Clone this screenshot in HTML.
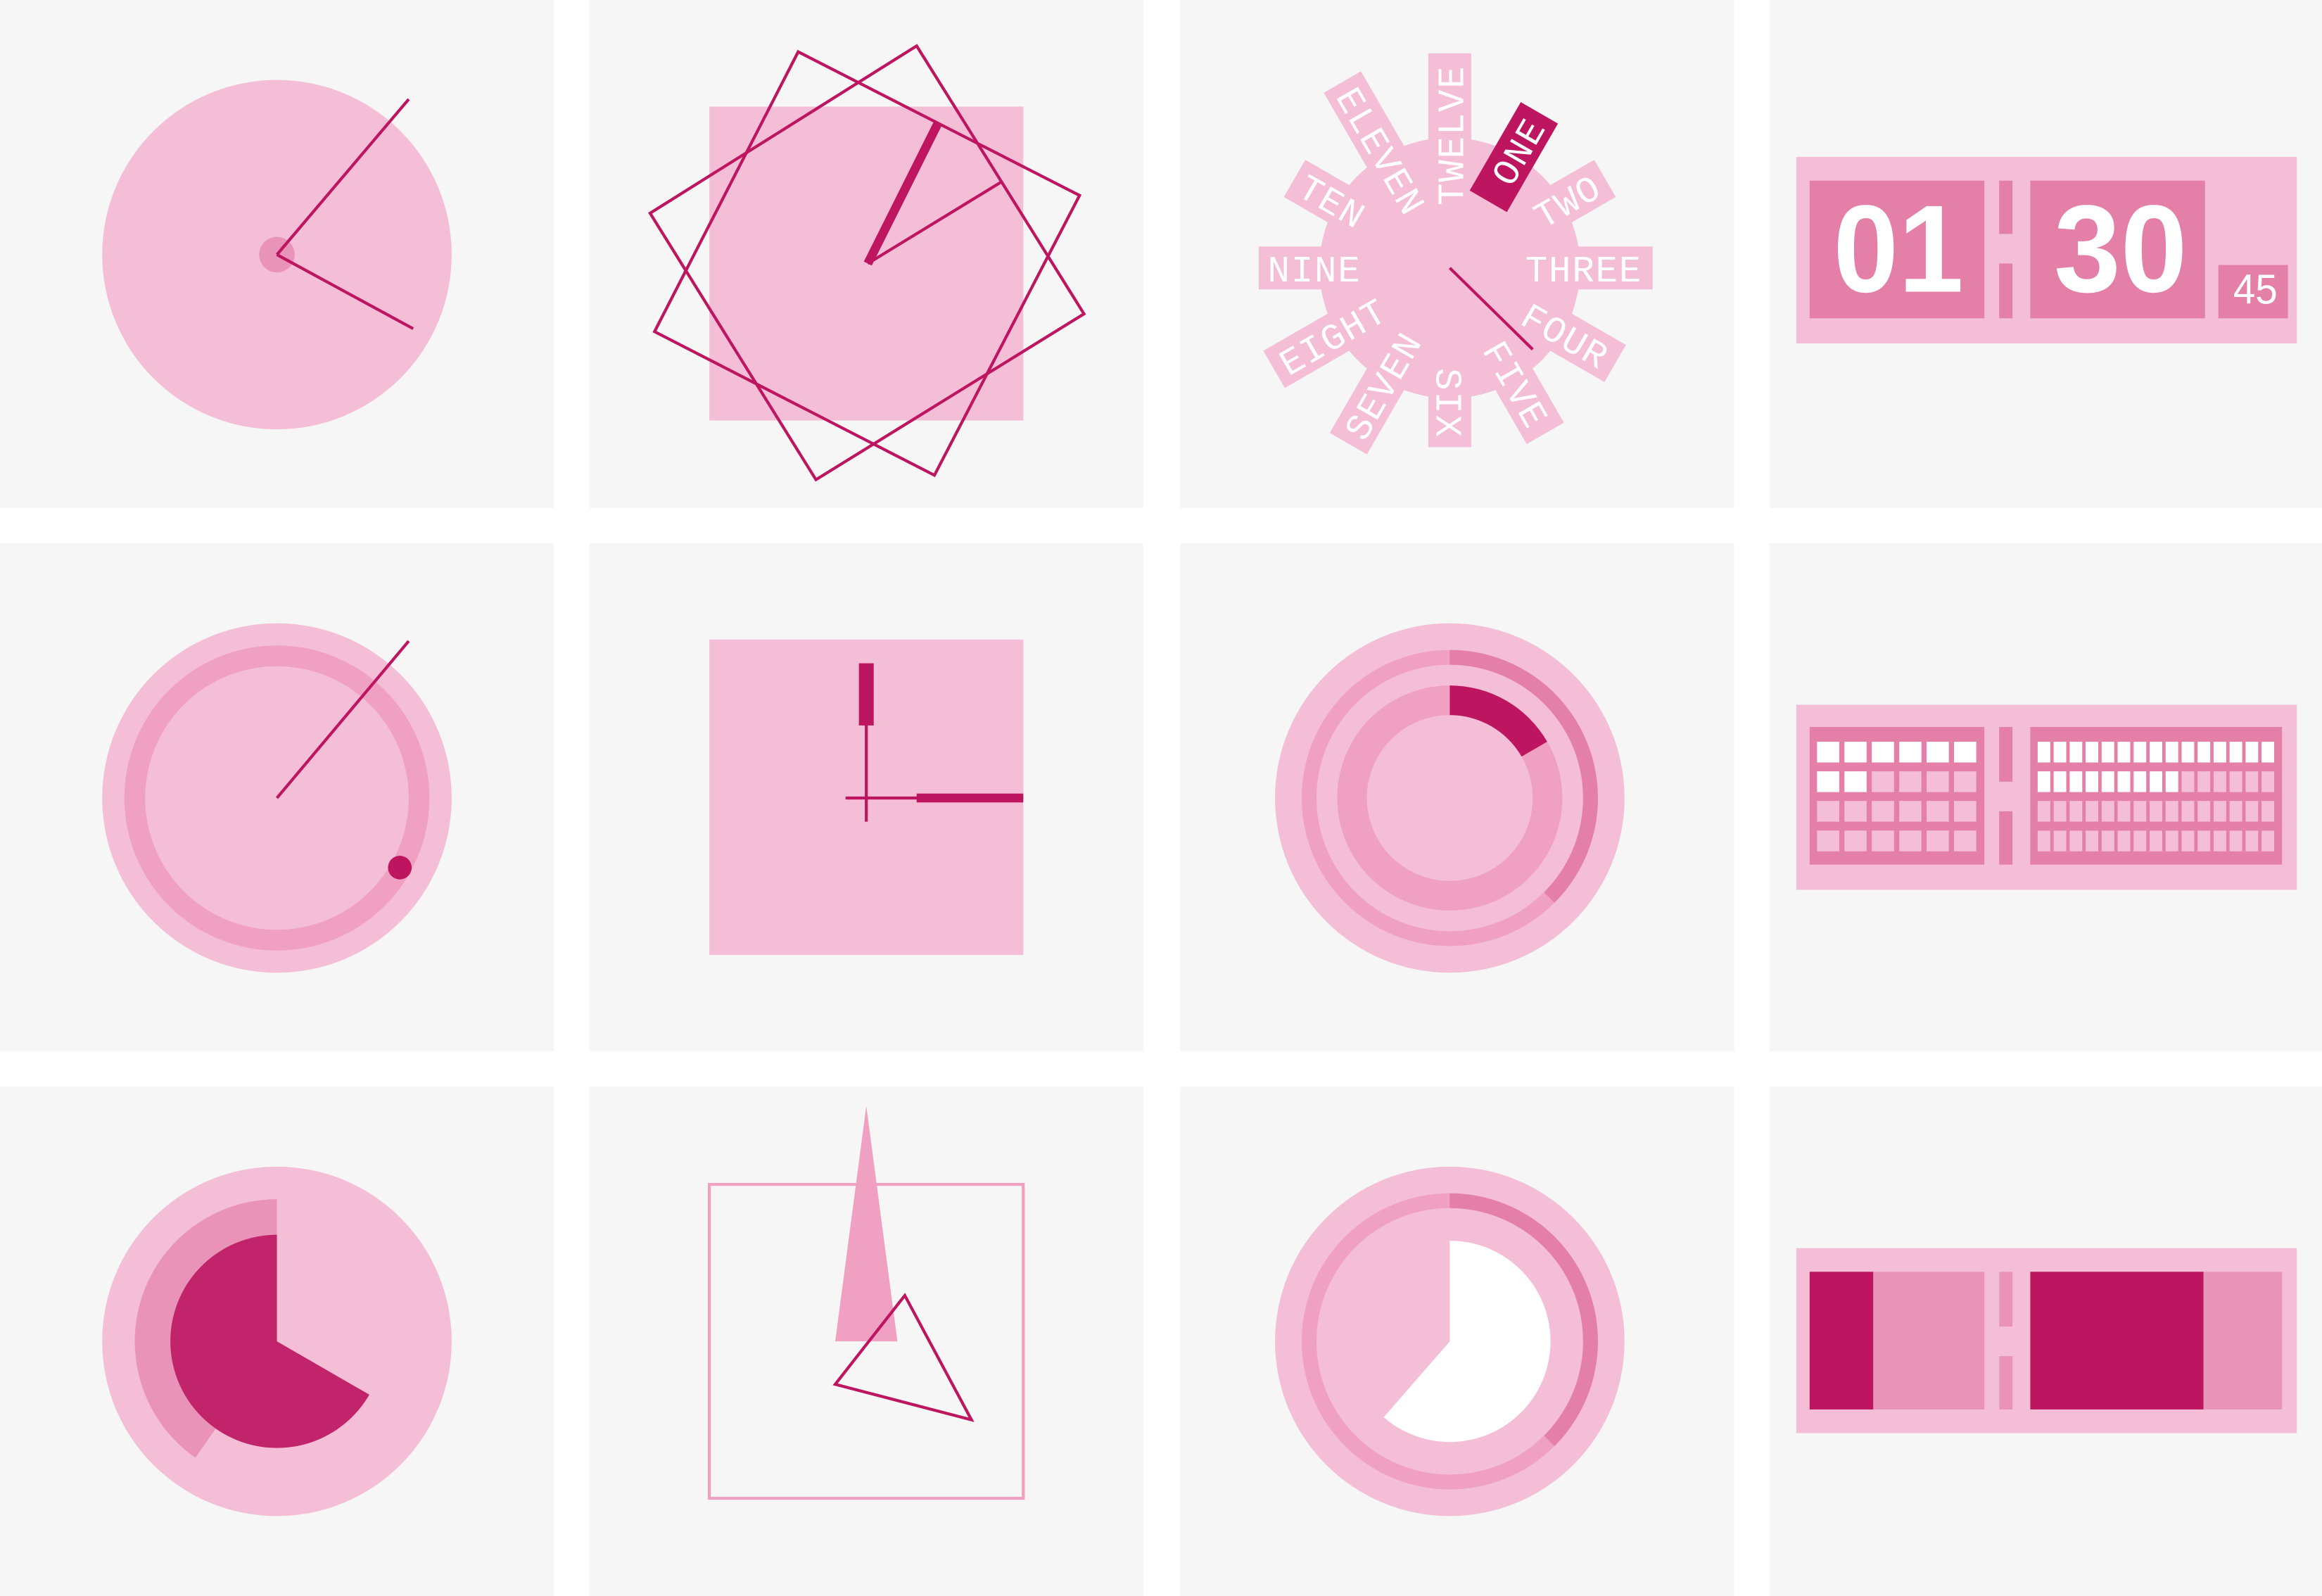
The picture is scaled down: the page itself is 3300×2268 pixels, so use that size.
<!DOCTYPE html>
<html><head><meta charset="utf-8"><style>
html,body{margin:0;padding:0;background:#fff;}
svg{display:block;}
</style></head><body>
<svg width="3300" height="2268" viewBox="0 0 1568 1078" preserveAspectRatio="none" xmlns="http://www.w3.org/2000/svg">
<rect width="1568" height="1078" fill="#fff"/>
<g fill="#f5f6f5">
<rect x="0" y="0" width="374" height="343"/><rect x="398" y="0" width="374" height="343"/><rect x="797" y="0" width="374" height="343"/><rect x="1195" y="0" width="373" height="343"/>
<rect x="0" y="367" width="374" height="343"/><rect x="398" y="367" width="374" height="343"/><rect x="797" y="367" width="374" height="343"/><rect x="1195" y="367" width="373" height="343"/>
<rect x="0" y="734" width="374" height="344"/><rect x="398" y="734" width="374" height="344"/><rect x="797" y="734" width="374" height="344"/><rect x="1195" y="734" width="373" height="344"/>
</g>

<circle cx="187" cy="172" r="118" fill="#f4bed6"/>
<circle cx="187" cy="172" r="12" fill="#e993b8"/>
<g stroke="#be1560" stroke-width="2" fill="none"><line x1="187" y1="172" x2="276" y2="67"/><line x1="187" y1="172" x2="279" y2="222"/></g>

<rect x="479" y="72" width="212" height="212" fill="#f4bed6"/>
<g stroke="#be1560" stroke-width="2" fill="none">
<polygon points="539,35 729,132 631,321 442,224"/>
<polygon points="619,31 732,212 551,324 439,144"/>
<line x1="586" y1="178" x2="676" y2="123"/>
</g>
<line x1="586" y1="178" x2="633" y2="84" stroke="#be1560" stroke-width="6"/>

<g fill="#f4bed6">
<circle cx="979" cy="181" r="88"/>
<g transform="translate(979,181) rotate(-90)"><rect x="0" y="-14.5" width="145" height="29"/></g>
<g transform="translate(979,181) rotate(-60)"><rect x="0" y="-14.5" width="121" height="29"/></g>
<g transform="translate(979,181) rotate(-30)"><rect x="0" y="-14.5" width="121" height="29"/></g>
<g transform="translate(979,181) rotate(0)"><rect x="0" y="-14.5" width="137" height="29"/></g>
<g transform="translate(979,181) rotate(30)"><rect x="0" y="-14.5" width="129" height="29"/></g>
<g transform="translate(979,181) rotate(60)"><rect x="0" y="-14.5" width="129" height="29"/></g>
<g transform="translate(979,181) rotate(90)"><rect x="0" y="-14.5" width="121" height="29"/></g>
<g transform="translate(979,181) rotate(120)"><rect x="0" y="-14.5" width="137" height="29"/></g>
<g transform="translate(979,181) rotate(150)"><rect x="0" y="-14.5" width="137" height="29"/></g>
<g transform="translate(979,181) rotate(180)"><rect x="0" y="-14.5" width="129" height="29"/></g>
<g transform="translate(979,181) rotate(210)"><rect x="0" y="-14.5" width="121" height="29"/></g>
<g transform="translate(979,181) rotate(240)"><rect x="0" y="-14.5" width="145" height="29"/></g>
</g>
<g transform="translate(979,181) rotate(-60)"><rect x="52" y="-14.5" width="69" height="29" fill="#be1560"/></g>
<g fill="#fff" font-family="Liberation Mono, monospace" font-size="25" letter-spacing="0.8">
<g transform="translate(979,181) rotate(-90)"><text x="137" y="9" text-anchor="end">TWELVE</text></g>
<g transform="translate(979,181) rotate(-60)"><text x="115" y="9" text-anchor="end">ONE</text></g>
<g transform="translate(979,181) rotate(-30)"><text x="115" y="9" text-anchor="end">TWO</text></g>
<g transform="translate(979,181) rotate(0)"><text x="130" y="9" text-anchor="end">THREE</text></g>
<g transform="translate(979,181) rotate(30)"><text x="122" y="9" text-anchor="end">FOUR</text></g>
<g transform="translate(979,181) rotate(60)"><text x="122" y="9" text-anchor="end">FIVE</text></g>
<g transform="translate(979,181) rotate(90)"><text x="115" y="9" text-anchor="end">SIX</text></g>
<g transform="translate(979,181) rotate(300)"><text x="-131" y="9" text-anchor="start">SEVEN</text></g>
<g transform="translate(979,181) rotate(330)"><text x="-131" y="9" text-anchor="start">EIGHT</text></g>
<g transform="translate(979,181) rotate(0)"><text x="-123" y="9" text-anchor="start">NINE</text></g>
<g transform="translate(979,181) rotate(30)"><text x="-115" y="9" text-anchor="start">TEN</text></g>
<g transform="translate(979,181) rotate(60)"><text x="-139" y="9" text-anchor="start">ELEVEN</text></g>
</g>
<line x1="979" y1="181" x2="1035" y2="236" stroke="#be1560" stroke-width="2"/>

<rect x="1213" y="106" width="338" height="126" fill="#f4bed6"/>
<g fill="#e480a8">
<rect x="1222" y="122" width="118" height="93"/>
<rect x="1350" y="122" width="9" height="36"/><rect x="1350" y="178" width="9" height="37"/>
<rect x="1371" y="122" width="118" height="93"/>
<rect x="1498" y="179" width="47" height="36"/>
</g>
<g fill="#fff" font-family="Liberation Sans, sans-serif" font-weight="bold">
<text x="1238" y="197" font-size="84" textLength="88" lengthAdjust="spacingAndGlyphs">01</text>
<text x="1387" y="197" font-size="84" textLength="90" lengthAdjust="spacingAndGlyphs">30</text>
</g>
<text x="1508" y="205" font-size="28" fill="#fff" font-family="Liberation Sans, sans-serif" textLength="30" lengthAdjust="spacingAndGlyphs">45</text>

<circle cx="187" cy="539" r="118" fill="#f4bed6"/>
<circle cx="187" cy="539" r="96" fill="none" stroke="#f0a0c0" stroke-width="14"/>
<line x1="187" y1="539" x2="276" y2="433" stroke="#be1560" stroke-width="2"/>
<circle cx="270" cy="586" r="8" fill="#be1560"/>

<rect x="479" y="432" width="212" height="213" fill="#f4bed6"/>
<rect x="580" y="448" width="10" height="42" fill="#be1560"/>
<line x1="585" y1="448" x2="585" y2="555" stroke="#be1560" stroke-width="2"/>
<line x1="571" y1="539" x2="691" y2="539" stroke="#be1560" stroke-width="2"/>
<rect x="619" y="536" width="72" height="6" fill="#be1560"/>

<circle cx="979" cy="539" r="118" fill="#f4bed6"/>
<circle cx="979" cy="539" r="95" fill="none" stroke="#f0a0c0" stroke-width="10"/>
<path d="M979,444 A95,95 0 0 1 1046.2,606.2" fill="none" stroke="#e480a8" stroke-width="10"/>
<circle cx="979" cy="539" r="66" fill="none" stroke="#f0a0c0" stroke-width="20"/>
<path d="M979,463 A76 76 0 0 1 1044.8,501 L1027.5,511 A56 56 0 0 0 979,483 Z" fill="#be1560"/>

<rect x="1213" y="476" width="338" height="125" fill="#f4bed6"/>
<g fill="#e480a8">
<rect x="1222" y="491" width="118" height="93"/>
<rect x="1350" y="491" width="9" height="37"/><rect x="1350" y="548" width="9" height="36"/>
<rect x="1371" y="491" width="170" height="93"/>
</g>
<g fill="#fff">
<rect x="1227" y="501" width="15" height="14"/><rect x="1245.5" y="501" width="15" height="14"/><rect x="1264" y="501" width="15" height="14"/><rect x="1282.5" y="501" width="15" height="14"/><rect x="1301" y="501" width="15" height="14"/><rect x="1319.5" y="501" width="15" height="14"/>
<rect x="1227" y="521" width="15" height="14"/><rect x="1245.5" y="521" width="15" height="14"/>
</g>
<g fill="#f4bed6">
<rect x="1264" y="521" width="15" height="14"/><rect x="1282.5" y="521" width="15" height="14"/><rect x="1301" y="521" width="15" height="14"/><rect x="1319.5" y="521" width="15" height="14"/>
<rect x="1227" y="541" width="15" height="14"/><rect x="1245.5" y="541" width="15" height="14"/><rect x="1264" y="541" width="15" height="14"/><rect x="1282.5" y="541" width="15" height="14"/><rect x="1301" y="541" width="15" height="14"/><rect x="1319.5" y="541" width="15" height="14"/>
<rect x="1227" y="561" width="15" height="14"/><rect x="1245.5" y="561" width="15" height="14"/><rect x="1264" y="561" width="15" height="14"/><rect x="1282.5" y="561" width="15" height="14"/><rect x="1301" y="561" width="15" height="14"/><rect x="1319.5" y="561" width="15" height="14"/>
</g>
<g fill="#fff">
<rect x="1376" y="501" width="8.5" height="14"/><rect x="1386.8" y="501" width="8.5" height="14"/><rect x="1397.6" y="501" width="8.5" height="14"/><rect x="1408.4" y="501" width="8.5" height="14"/><rect x="1419.2" y="501" width="8.5" height="14"/><rect x="1430" y="501" width="8.5" height="14"/><rect x="1440.8" y="501" width="8.5" height="14"/><rect x="1451.6" y="501" width="8.5" height="14"/><rect x="1462.4" y="501" width="8.5" height="14"/><rect x="1473.2" y="501" width="8.5" height="14"/><rect x="1484" y="501" width="8.5" height="14"/><rect x="1494.8" y="501" width="8.5" height="14"/><rect x="1505.6" y="501" width="8.5" height="14"/><rect x="1516.4" y="501" width="8.5" height="14"/><rect x="1527.2" y="501" width="8.5" height="14"/>
<rect x="1376" y="521" width="8.5" height="14"/><rect x="1386.8" y="521" width="8.5" height="14"/><rect x="1397.6" y="521" width="8.5" height="14"/><rect x="1408.4" y="521" width="8.5" height="14"/><rect x="1419.2" y="521" width="8.5" height="14"/><rect x="1430" y="521" width="8.5" height="14"/><rect x="1440.8" y="521" width="8.5" height="14"/><rect x="1451.6" y="521" width="8.5" height="14"/><rect x="1462.4" y="521" width="8.5" height="14"/>
</g>
<g fill="#f4bed6">
<rect x="1473.2" y="521" width="8.5" height="14"/><rect x="1484" y="521" width="8.5" height="14"/><rect x="1494.8" y="521" width="8.5" height="14"/><rect x="1505.6" y="521" width="8.5" height="14"/><rect x="1516.4" y="521" width="8.5" height="14"/><rect x="1527.2" y="521" width="8.5" height="14"/>
<rect x="1376" y="541" width="159.7" height="14"/>
<rect x="1376" y="561" width="159.7" height="14"/>
</g>
<g fill="#e480a8">
<rect x="1384.5" y="541" width="2.3" height="34"/><rect x="1395.3" y="541" width="2.3" height="34"/><rect x="1406.1" y="541" width="2.3" height="34"/><rect x="1416.9" y="541" width="2.3" height="34"/><rect x="1427.7" y="541" width="2.3" height="34"/><rect x="1438.5" y="541" width="2.3" height="34"/><rect x="1449.3" y="541" width="2.3" height="34"/><rect x="1460.1" y="541" width="2.3" height="34"/><rect x="1470.9" y="541" width="2.3" height="34"/><rect x="1481.7" y="541" width="2.3" height="34"/><rect x="1492.5" y="541" width="2.3" height="34"/><rect x="1503.3" y="541" width="2.3" height="34"/><rect x="1514.1" y="541" width="2.3" height="34"/><rect x="1524.9" y="541" width="2.3" height="34"/>
<rect x="1376" y="555" width="160" height="6"/>
</g>

<circle cx="187" cy="906" r="118" fill="#f4bed6"/>
<path d="M187,906 L131.9,984.6 A96 96 0 0 1 187,810 Z" fill="#e993b8"/>
<path d="M187,906 L249.4,942 A72 72 0 1 1 187,834 Z" fill="#c2246b"/>

<rect x="479" y="800" width="212" height="212" fill="none" stroke="#f0a0c0" stroke-width="2"/>
<polygon points="585,747 606,906 564,906" fill="#f0a0c0"/>
<polygon points="564,935 611,875 656,959" fill="none" stroke="#be1560" stroke-width="2"/>

<circle cx="979" cy="906" r="118" fill="#f4bed6"/>
<circle cx="979" cy="906" r="95" fill="none" stroke="#f0a0c0" stroke-width="10"/>
<path d="M979,811 A95,95 0 0 1 1046.2,973.2" fill="none" stroke="#e480a8" stroke-width="10"/>
<path d="M979,906 L979,838 A68 68 0 1 1 934.4,957.3 Z" fill="#fff"/>

<rect x="1213" y="843" width="338" height="125" fill="#f4bed6"/>
<rect x="1222" y="859" width="43" height="93" fill="#be1560"/>
<rect x="1265" y="859" width="75" height="93" fill="#e993b8"/>
<rect x="1350" y="859" width="9" height="37" fill="#e993b8"/>
<rect x="1350" y="916" width="9" height="36" fill="#e993b8"/>
<rect x="1371" y="859" width="117" height="93" fill="#be1560"/>
<rect x="1488" y="859" width="53" height="93" fill="#e993b8"/>
</svg>
</body></html>
